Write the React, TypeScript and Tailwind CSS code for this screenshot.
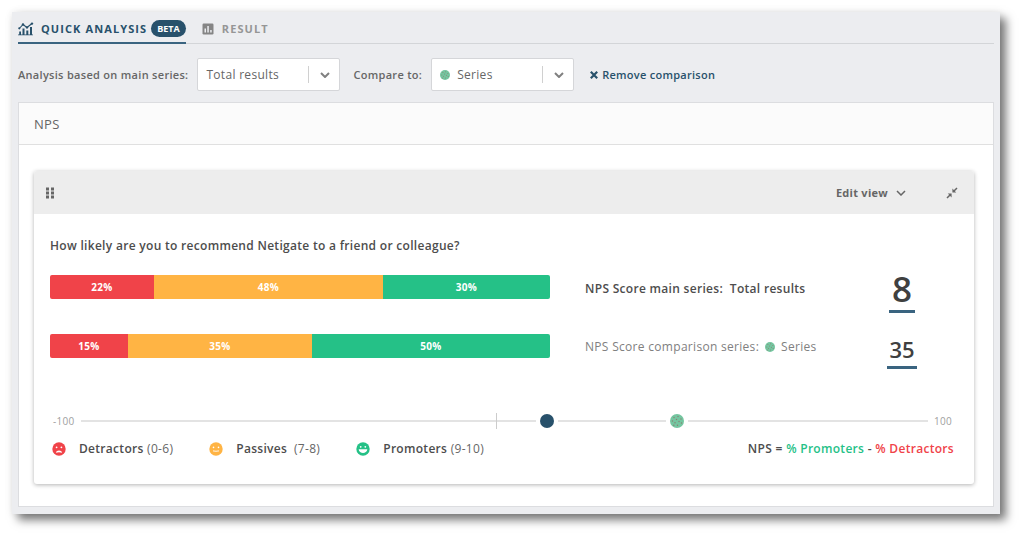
import React from "react";

type Segment = { label: string; share: number; color: string };

const mainBar: Segment[] = [
  { label: "22%", share: 104, color: "bg-[#f04349]" },
  { label: "48%", share: 229, color: "bg-[#ffb444]" },
  { label: "30%", share: 167, color: "bg-[#25c187]" },
];
const comparisonBar: Segment[] = [
  { label: "15%", share: 78, color: "bg-[#f04349]" },
  { label: "35%", share: 184, color: "bg-[#ffb444]" },
  { label: "50%", share: 238, color: "bg-[#25c187]" },
];

function Bar({ segments }: { segments: Segment[] }) {
  return (
    <div className="flex h-6 overflow-hidden rounded-[2px]">
      {segments.map((s) => (
        <div
          key={s.label}
          className={`flex items-center justify-center text-[10px] font-bold text-white ${s.color}`}
          style={{ flexGrow: s.share, flexBasis: 0 }}
        >
          {s.label}
        </div>
      ))}
    </div>
  );
}

function SeriesDot({ className }: { className: string }) {
  return (
    <svg viewBox="0 0 14 14" className={className} aria-hidden="true">
      <circle cx="7" cy="7" r="7" fill="#74c6a0" />
      <g fill="#8a7f72">
        <circle cx="4" cy="3.5" r=".7" />
        <circle cx="8" cy="2.5" r=".7" />
        <circle cx="11" cy="5" r=".7" />
        <circle cx="6.5" cy="5.5" r=".7" />
        <circle cx="2.5" cy="7" r=".7" />
        <circle cx="9" cy="7.5" r=".7" />
        <circle cx="5" cy="8.8" r=".7" />
        <circle cx="11.5" cy="9" r=".7" />
        <circle cx="7.5" cy="11.3" r=".7" />
        <circle cx="3.8" cy="11.3" r=".7" />
      </g>
    </svg>
  );
}

function Chevron({ className }: { className: string }) {
  return (
    <svg viewBox="0 0 10 6" className={className} fill="none" stroke="currentColor" aria-hidden="true">
      <path d="M1 1l4 4 4-4" />
    </svg>
  );
}

function SelectBox({ id, label, dot }: { id: string; label: string; dot?: boolean }) {
  return (
    <div className="relative w-[143px]">
      <select
        id={id}
        className={`block h-[33px] w-full appearance-none rounded-[2px] border border-[#d5d6d9] bg-white pr-9 text-[12px] tracking-wide text-[#666] ${dot ? "pl-[25px]" : "pl-2"}`}
      >
        <option>{label}</option>
      </select>
      {dot && <SeriesDot className="pointer-events-none absolute top-3 left-[9px] size-[10px]" />}
      <span className="pointer-events-none absolute inset-y-2 right-0 flex w-8 items-center justify-center border-l border-[#d0d0d0] text-[#808080]">
        <Chevron className="h-[6px] w-[10px] stroke-2" />
      </span>
    </div>
  );
}

type Mood = "sad" | "neutral" | "happy";

function Face({ mood }: { mood: Mood }) {
  const fill = mood === "sad" ? "#f04349" : mood === "neutral" ? "#ffb444" : "#25c187";
  return (
    <svg viewBox="0 0 14 14" className="size-[14px]" aria-hidden="true">
      <circle cx="7" cy="7" r="6.7" fill={fill} />
      {mood === "sad" && (
        <>
          <circle cx="4.600" cy="5.300" r=".9" fill="#fff" />
          <circle cx="9.400" cy="5.300" r=".9" fill="#fff" />
          <path d="M3.900 10.700C4.400 7.600 9.600 7.600 10.100 10.700q-3.100-1-6.200 0z" fill="#fff" />
        </>
      )}
      {mood === "neutral" && (
        <>
          <circle cx="4.500" cy="5.400" r=".8" fill="#fff" />
          <circle cx="9.500" cy="5.400" r=".8" fill="#fff" />
          <path d="M4 8.900q3 .7 6 0" stroke="#fff" fill="none" strokeWidth=".9" />
        </>
      )}
      {mood === "happy" && (
        <>
          <circle cx="4.700" cy="4.800" r=".9" fill="#fff" />
          <circle cx="9.300" cy="4.800" r=".9" fill="#fff" />
          <path d="M2.700 7.200h8.600c-.4 5-8.200 5-8.600 0z" fill="#fff" />
        </>
      )}
    </svg>
  );
}

function LegendItem({ mood, name, range }: { mood: Mood; name: string; range: string }) {
  return (
    <li className="flex items-center gap-[13px]">
      <Face mood={mood} />
      <span>
        <span className="font-semibold text-[#4d4d4d]">{name}</span> {range}
      </span>
    </li>
  );
}

function Marker({ position, children }: { position: number; children: React.ReactNode }) {
  return (
    <span
      className="absolute top-1/2 -translate-x-1/2 -translate-y-1/2 bg-white px-1"
      style={{ left: `${position}%` }}
    >
      {children}
    </span>
  );
}

export default function App() {
  return (
    <div className="bg-white pt-3 pr-6 pb-6 pl-3 font-['Open_Sans',sans-serif] text-[12px] leading-4 tracking-wide text-[#666]">
      <main className="bg-[#ecedf0] px-[6px] pb-[7px] shadow-[6px_6px_9px_0px_rgba(0,0,0,0.52),0_0_8px_rgba(0,0,0,0.08)]">
        <nav className="flex h-8 border-b border-[#d3d5d8]">
          <a href="#analysis" className="-mb-px flex items-center gap-[7px] border-b-2 border-[#3a6480] pt-[3px] text-[#28516b]">
            <svg viewBox="0 0 16 14" className="h-[14px] w-4" fill="none" stroke="currentColor" aria-hidden="true">
              <path d="M1.300 6.500L5 2.500l4 3 5-4" strokeWidth="1.100" />
              <g fill="currentColor" stroke="none">
                <circle cx="1.300" cy="6.300" r="1.100" />
                <circle cx="5" cy="2.500" r="1.200" />
                <circle cx="9" cy="5.400" r="1.200" />
                <circle cx="14" cy="1.600" r="1.200" />
                <path d="M1.200 9.500H3V13H1.200zM4.500 6.500h2V13h-2zM8.300 8.500h2V13h-2zM12 5h2v8h-2zM0 12.500h15v.8H0z" />
              </g>
            </svg>
            <span className="text-[11px] font-bold tracking-widest">QUICK ANALYSIS</span>
            <span className="-ml-[3px] flex h-[17px] items-center rounded-full bg-[#28516b] px-[6px] text-[9px] font-bold tracking-normal text-white">
              BETA
            </span>
          </a>
          <a href="#result" className="ml-4 flex items-center gap-2 pt-[3px] text-[#969696]">
            <svg viewBox="0 0 12 12" className="size-3" aria-hidden="true">
              <rect x=".5" y=".5" width="11" height="11" rx="1.200" fill="#858585" />
              <path d="M2.500 5.500H4v4H2.500zM5.300 3h1.500v6.500H5.300zM8.200 7h1.500v2.500H8.200z" fill="#ecedf0" />
            </svg>
            <span className="text-[11px] font-bold tracking-widest">RESULT</span>
          </a>
        </nav>

        <div className="flex items-center pt-[14px] pb-[11px]">
          <label htmlFor="main-series" className="mr-[9px] text-[11px] font-semibold">
            Analysis based on main series:
          </label>
          <SelectBox id="main-series" label="Total results" />
          <label htmlFor="comparison" className="mr-[9px] ml-[13px] text-[11px] font-semibold">
            Compare to:
          </label>
          <SelectBox id="comparison" label="Series" dot />
          <button type="button" className="ml-4 flex items-center gap-1 text-[11px] font-semibold tracking-wide text-[#28516b]">
            <svg viewBox="0 0 8 8" className="size-2" stroke="currentColor" strokeWidth="2.200" aria-hidden="true">
              <path d="M.8.8l6.400 6.400M7.200.8L.8 7.200" />
            </svg>
            Remove comparison
          </button>
        </div>

        <section className="border border-[#dcdde0] bg-white">
          <h1 className="flex h-[42px] items-center border-b border-[#e0e0e0] bg-[#fbfbfb] px-[15px] text-[13px]">NPS</h1>
          <article className="mt-[26px] mr-[19px] mb-[22px] ml-[15px] rounded-[3px] shadow-[0_1px_4px_rgba(0,0,0,0.3)]">
            <header className="flex h-[43px] items-center rounded-t-[3px] bg-[#ededed] pr-4 pl-3">
              <svg viewBox="0 0 8 12" className="h-3 w-2" fill="#666" aria-hidden="true">
                <path d="M0 .5h3v3H0zM5 .5h3v3H5zM0 4.500h3v3H0zM5 4.500h3v3H5zM0 8.500h3v3H0zM5 8.500h3v3H5z" />
              </svg>
              <button type="button" className="ml-auto flex items-center gap-2 text-[11px] font-bold tracking-wide">
                Edit view
                <Chevron className="h-[6px] w-[10px] stroke-[1.5]" />
              </button>
              <button type="button" aria-label="Collapse" className="ml-10">
                <svg viewBox="0 0 12 12" className="size-3" aria-hidden="true">
                  <path d="M1 11l3-3M11 1L8 4" stroke="#666" strokeWidth="1.500" />
                  <path d="M1.800 6.600h3.800v3.800zM6.400 1.600v3.800h3.800z" fill="#666" />
                </svg>
              </button>
            </header>

            <div className="px-4 pt-6 pb-[27px]">
              <h2 className="mb-[9px] font-semibold text-[#4d4d4d]">
                How likely are you to recommend Netigate to a friend or colleague?
              </h2>
              <div className="grid grid-cols-[500fr_267fr_71fr] items-start gap-x-[35px]">
                <div className="pt-[12px]">
                  <Bar segments={mainBar} />
                </div>
                <p className="pt-[18px] font-semibold text-[#4d4d4d]">
                  NPS Score main series:&nbsp; Total results
                </p>
                <div className="flex h-[59px] w-[30px] justify-center pt-[8px]">
                  <strong className="h-[42px] border-b-3 border-[#3a6480] px-[3px] text-[35px] leading-9 font-semibold tracking-normal text-[#404040]">
                    8
                  </strong>
                </div>
                <div className="pt-[12px]">
                  <Bar segments={comparisonBar} />
                </div>
                <p className="flex items-center gap-[6px] pt-[17px] text-[#808080]">
                  NPS Score comparison series:
                  <SeriesDot className="size-[10px]" />
                  Series
                </p>
                <div className="flex h-[59px] w-[30px] justify-center pt-[12px]">
                  <strong className="h-[35px] border-b-3 border-[#3a6480] px-[2px] text-[22px] leading-[30px] font-semibold tracking-normal text-[#404040]">
                    35
                  </strong>
                </div>
              </div>

              <div className="mt-8 flex items-center gap-[6px] pr-[6px] pl-[3px] text-[10px] text-[#a0a0a0]">
                <span>-100</span>
                <div className="relative flex h-4 flex-1 items-center">
                  <div className="h-[2px] flex-1 bg-[#e3e3e3]" />
                  <span className="absolute top-0 left-[49%] h-4 w-px bg-[#ccc]" />
                  <Marker position={55}>
                    <span className="block size-[14px] rounded-full bg-[#28516b]" />
                  </Marker>
                  <Marker position={70.4}>
                    <SeriesDot className="block size-[14px]" />
                  </Marker>
                </div>
                <span>100</span>
              </div>

              <div className="mt-[12px] flex items-center justify-between pr-1 pl-[2px]">
                <ul className="flex gap-9">
                  <LegendItem mood="sad" name="Detractors" range="(0-6)" />
                  <LegendItem mood="neutral" name="Passives" range={"\u00a0(7-8)"} />
                  <LegendItem mood="happy" name="Promoters" range="(9-10)" />
                </ul>
                <p className="font-semibold text-[#4d4d4d]">
                  NPS = <span className="text-[#25c187]">% Promoters</span> -{" "}
                  <span className="text-[#f04349]">% Detractors</span>
                </p>
              </div>
            </div>
          </article>
        </section>
      </main>
    </div>
  );
}
